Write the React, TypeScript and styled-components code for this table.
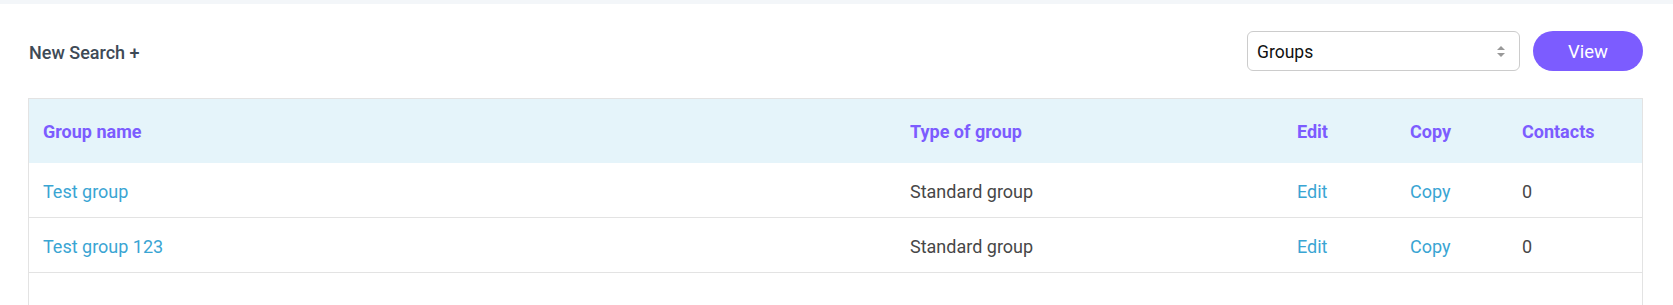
import React, { FC } from 'react'
import styled, { createGlobalStyle } from 'styled-components'

const GlobalStyle = createGlobalStyle`
  html, body {
    margin: 0;
    padding: 0;
    background: #ffffff;
    font-family: Roboto, 'Liberation Sans', sans-serif;
  }
`

const TopStrip = styled.div({
  height: '4px',
  backgroundColor: '#f3f6f9',
})

const Page = styled.main({
  padding: '0px 30px 0px 28px',
})

const Toolbar = styled.div({
  display: 'flex',
  alignItems: 'center',
  justifyContent: 'space-between',
  height: '94px',
  paddingLeft: '1px',
})

const NewSearch = styled.a({
  fontSize: '18px',
  fontWeight: 500,
  color: '#3e4a56',
  cursor: 'pointer',
  paddingTop: '2px',
})

const Controls = styled.div({
  display: 'flex',
  alignItems: 'center',
  gap: '13px',
})

const SelectBox = styled.div({
  position: 'relative',
  display: 'flex',
  alignItems: 'center',
  width: '273px',
  height: '40px',
  boxSizing: 'border-box',
  border: '1px solid #cccccc',
  borderRadius: '6px',
  padding: '1px 9px 0px',
  fontSize: '17.5px',
  color: '#111111',
})

const Arrows = styled.svg({
  position: 'absolute',
  right: '14px',
  top: '14px',
})

const ViewButton = styled.button({
  width: '110px',
  height: '40px',
  border: 'none',
  borderRadius: '20px',
  backgroundColor: '#7c5cff',
  color: '#ffffff',
  fontFamily: 'inherit',
  fontSize: '18.5px',
  paddingTop: '2px',
  cursor: 'pointer',
})

const Table = styled.div({
  borderLeft: '1px solid #e3e3e3',
  borderRight: '1px solid #e3e3e3',
  borderTop: '1px solid #e3e3e3',
  minHeight: '220px',
})

const Row = styled.div<{ header?: boolean }>(({ header }) => ({
  display: 'grid',
  gridTemplateColumns: '867px 387px 113px 112px 1fr',
  alignItems: 'center',
  boxSizing: 'border-box',
  height: header ? '64px' : '55px',
  backgroundColor: header ? '#e5f4fa' : '#ffffff',
  borderBottom: header ? 'none' : '1px solid #e3e3e3',
  padding: header ? '0px 0px 0px 14px' : '3px 0px 0px 14px',
}))

const HeadCell = styled.div({
  fontSize: '18px',
  fontWeight: 700,
  color: '#7c5cff',
})

const Cell = styled.div({
  fontSize: '18px',
  color: '#474747',
})

const CellLink = styled.a({
  fontSize: '18px',
  color: '#3aa5d3',
  cursor: 'pointer',
})

const groups = [
  { name: 'Test group', type: 'Standard group', contacts: 0 },
  { name: 'Test group 123', type: 'Standard group', contacts: 0 },
]

const App: FC = () => (
  <>
    <GlobalStyle />
    <TopStrip />
    <Page>
      <Toolbar>
        <NewSearch>New Search +</NewSearch>
        <Controls>
          <SelectBox>
            Groups
            <Arrows width="8" height="11" viewBox="0 0 8 11">
              <path d="M4 0 L8 4 H0 Z M4 11 L8 7 H0 Z" fill="#999999" />
            </Arrows>
          </SelectBox>
          <ViewButton>View</ViewButton>
        </Controls>
      </Toolbar>

      <Table>
        <Row header>
          <HeadCell>Group name</HeadCell>
          <HeadCell>Type of group</HeadCell>
          <HeadCell>Edit</HeadCell>
          <HeadCell>Copy</HeadCell>
          <HeadCell>Contacts</HeadCell>
        </Row>
        {groups.map((g) => (
          <Row key={g.name}>
            <CellLink>{g.name}</CellLink>
            <Cell>{g.type}</Cell>
            <CellLink>Edit</CellLink>
            <CellLink>Copy</CellLink>
            <Cell>{g.contacts}</Cell>
          </Row>
        ))}
      </Table>
    </Page>
  </>
)

export default App
